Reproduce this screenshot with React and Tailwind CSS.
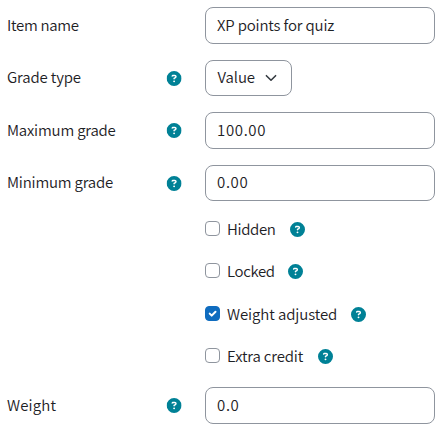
import { FaCircleQuestion } from "react-icons/fa6";

const HelpIcon = ({ className = "" }) => (
  <FaCircleQuestion className={`size-[15px] shrink-0 text-[#008196] ${className}`} />
);

function Row({ label, labelClass = "tracking-[-0.25px]", help, height, gap, children }) {
  return (
    <div className={`flex items-center ${height} ${gap}`}>
      <div className="flex w-[174px] shrink-0 items-center justify-between">
        <span className={`-translate-y-px whitespace-nowrap ${labelClass}`}>{label}</span>
        {help && <HelpIcon className="translate-x-[0.6px]" />}
      </div>
      <div className="ml-[24px] flex h-full">{children}</div>
    </div>
  );
}

function Field({ value, textClass = "tracking-[0.65px]" }) {
  return (
    <div className="flex h-full w-[230px] items-center rounded-lg border border-[#8f959e] px-[11px]">
      <span className={`-translate-y-px whitespace-nowrap ${textClass}`}>{value}</span>
    </div>
  );
}

function Check({ label, labelClass, checked, help, height }) {
  return (
    <div className={`flex items-center ${height}`}>
      <span
        className={`flex size-[15px] shrink-0 -translate-y-px items-center justify-center rounded-[4px] border ${
          checked ? "border-[#0f6cbf] bg-[#0f6cbf]" : "border-[#8f959e] bg-white"
        }`}
      >
        {checked && (
          <svg viewBox="0 0 15 15" className="size-[15px] shrink-0" fill="none" stroke="white" strokeWidth="2" strokeLinecap="round" strokeLinejoin="round">
            <path d="M4.7 7.6 6.7 9.6 10.5 5.7" />
          </svg>
        )}
      </span>
      <span className={`ml-[7px] whitespace-nowrap ${labelClass}`}>{label}</span>
      <HelpIcon className={help} />
    </div>
  );
}

export default function App() {
  return (
    <main className="h-[432px] w-[443px] overflow-hidden bg-white pt-[7px] pl-[7px] font-['Noto_Sans_CJK_SC',sans-serif] text-[15px] leading-[22px] font-[350] text-[#1d2125]">
      <Row label="Item name" labelClass="tracking-[-0.3px]" height="h-[37px]" gap="mb-4">
        <Field value="XP points for quiz" textClass="tracking-[-0.17px]" />
      </Row>
      <Row label="Grade type" labelClass="tracking-[-0.15px]" help height="h-9" gap="mb-4">
        <div className="flex h-full w-[87px] items-center justify-between rounded-lg border border-[#8f959e] pr-[14px] pl-[11.5px]">
          <span className="-translate-y-px tracking-[-0.1px]">Value</span>
          <svg viewBox="0 0 12 8" className="h-2 w-3" fill="none" stroke="#343a40" strokeWidth="1.6" strokeLinecap="round" strokeLinejoin="round">
            <path d="m1.4 1.7 4.6 4.5 4.6-4.5" />
          </svg>
        </div>
      </Row>
      <Row label="Maximum grade" labelClass="tracking-[-0.2px]" help height="h-[37px]" gap="mb-4">
        <Field value="100.00" />
      </Row>
      <Row label="Minimum grade" labelClass="tracking-[-0.2px]" help height="h-9" gap="">
        <Field value="0.00" />
      </Row>
      <div className="ml-[198px] pt-[7px]">
        <Check label="Hidden" labelClass="tracking-[-0.35px]" help="ml-[14px]" height="h-[42px]" />
        <Check label="Locked" labelClass="-translate-y-px tracking-[-0.35px]" help="ml-[13.5px]" height="h-[43px]" />
        <Check label="Weight adjusted" labelClass="tracking-[-0.1px]" help="ml-[14px]" checked height="h-[42px]" />
        <Check label="Extra credit" labelClass="tracking-[-0.15px]" help="ml-[14.5px]" height="h-[42px]" />
      </div>
      <div className="pt-[10px]">
        <Row label="Weight" labelClass="tracking-[0.15px]" help height="h-[37px]" gap="">
          <Field value="0.0" />
        </Row>
      </div>
    </main>
  );
}
